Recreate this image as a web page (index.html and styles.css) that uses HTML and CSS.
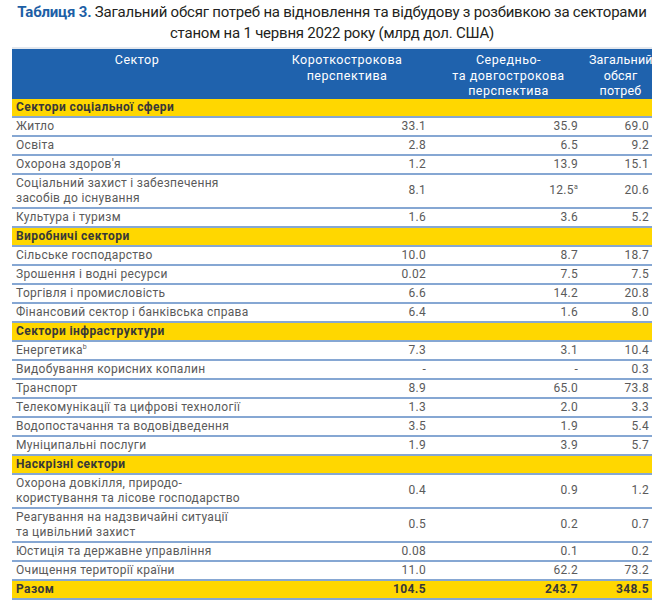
FILE: index.html
```html
<!DOCTYPE html>
<html lang="uk">
<head>
<meta charset="utf-8">
<link rel="stylesheet" href="styles.css">
</head>
<body>
<div class="page">
  <h1 class="title"><span class="label">Таблиця 3.</span> Загальний обсяг потреб на відновлення та відбудову з розбивкою за секторами<br>станом на 1 червня 2022 року (млрд дол. США)</h1>
  <table class="tbl">
    <colgroup>
      <col class="c1"><col class="c2"><col class="c3"><col class="c4">
    </colgroup>
    <thead>
      <tr>
        <th>Сектор</th>
        <th>Короткострокова<br>перспектива</th>
        <th>Середньо-<br>та довгострокова<br>перспектива</th>
        <th class="h4">Загальний<br>обсяг<br>потреб</th>
      </tr>
    </thead>
    <tbody>
      <tr class="sec"><td>Сектори соціальної сфери</td><td></td><td></td><td></td></tr>
      <tr><td>Житло</td><td class="n2">33.1</td><td class="n3">35.9</td><td class="n4">69.0</td></tr>
      <tr><td>Освіта</td><td class="n2">2.8</td><td class="n3">6.5</td><td class="n4">9.2</td></tr>
      <tr><td>Охорона здоров'я</td><td class="n2">1.2</td><td class="n3">13.9</td><td class="n4">15.1</td></tr>
      <tr><td>Соціальний захист і забезпечення<br>засобів до існування</td><td class="n2">8.1</td><td class="n3">12.5<sup>a</sup></td><td class="n4">20.6</td></tr>
      <tr><td>Культура і туризм</td><td class="n2">1.6</td><td class="n3">3.6</td><td class="n4">5.2</td></tr>
      <tr class="sec"><td>Виробничі сектори</td><td></td><td></td><td></td></tr>
      <tr><td>Сільське господарство</td><td class="n2">10.0</td><td class="n3">8.7</td><td class="n4">18.7</td></tr>
      <tr><td>Зрошення і водні ресурси</td><td class="n2">0.02</td><td class="n3">7.5</td><td class="n4">7.5</td></tr>
      <tr><td>Торгівля і промисловість</td><td class="n2">6.6</td><td class="n3">14.2</td><td class="n4">20.8</td></tr>
      <tr><td>Фінансовий сектор і банківська справа</td><td class="n2">6.4</td><td class="n3">1.6</td><td class="n4">8.0</td></tr>
      <tr class="sec"><td>Сектори інфраструктури</td><td></td><td></td><td></td></tr>
      <tr><td>Енергетика<sup>b</sup></td><td class="n2">7.3</td><td class="n3">3.1</td><td class="n4">10.4</td></tr>
      <tr><td>Видобування корисних копалин</td><td class="n2">-</td><td class="n3">-</td><td class="n4">0.3</td></tr>
      <tr><td>Транспорт</td><td class="n2">8.9</td><td class="n3">65.0</td><td class="n4">73.8</td></tr>
      <tr><td>Телекомунікації та цифрові технології</td><td class="n2">1.3</td><td class="n3">2.0</td><td class="n4">3.3</td></tr>
      <tr><td>Водопостачання та водовідведення</td><td class="n2">3.5</td><td class="n3">1.9</td><td class="n4">5.4</td></tr>
      <tr><td>Муніципальні послуги</td><td class="n2">1.9</td><td class="n3">3.9</td><td class="n4">5.7</td></tr>
      <tr class="sec"><td>Наскрізні сектори</td><td></td><td></td><td></td></tr>
      <tr><td>Охорона довкілля, природо-<br>користування та лісове господарство</td><td class="n2">0.4</td><td class="n3">0.9</td><td class="n4">1.2</td></tr>
      <tr><td>Реагування на надзвичайні ситуації<br>та цивільний захист</td><td class="n2">0.5</td><td class="n3">0.2</td><td class="n4">0.7</td></tr>
      <tr><td>Юстиція та державне управління</td><td class="n2">0.08</td><td class="n3">0.1</td><td class="n4">0.2</td></tr>
      <tr><td>Очищення території країни</td><td class="n2">11.0</td><td class="n3">62.2</td><td class="n4">73.2</td></tr>
      <tr class="sec total"><td>Разом</td><td class="n2">104.5</td><td class="n3">243.7</td><td class="n4">348.5</td></tr>
    </tbody>
  </table>
</div>
</body>
</html>
```

FILE: styles.css
```css
html, body {
  margin: 0;
  padding: 0;
  background: #ffffff;
}

.page {
  width: 663px;
  padding: 0 11px 0 12px;
  box-sizing: border-box;
}

.title {
  margin: 0;
  padding-top: 2px;
  height: 47px;
  font-family: "Roboto", sans-serif;
  font-weight: normal;
  font-size: 15px;
  letter-spacing: -0.22px;
  line-height: 21px;
  color: #231f20;
  text-align: center;
  white-space: nowrap;
  box-sizing: border-box;
}

.title .label {
  color: #1d5fa6;
  font-weight: bold;
}

.tbl {
  width: 640px;
  border-collapse: collapse;
  table-layout: fixed;
  font-family: "Roboto", sans-serif;
  font-size: 12px;
  letter-spacing: 0.3px;
  color: #5a5a5a;
  border-top: 2px solid #e4e8ee;
}

.c1 { width: 250px; }
.c2 { width: 170px; }
.c3 { width: 153px; }
.c4 { width: 67px; }

.tbl th {
  background: #1f62ad;
  color: #ffffff;
  font-weight: normal;
  font-size: 12.5px;
  letter-spacing: 0.5px;
  line-height: 15.5px;
  height: 50px;
  padding: 3px 0 0 0;
  vertical-align: top;
  text-align: center;
  box-sizing: border-box;
}

.tbl th.h4 {
  padding-left: 4px;
  letter-spacing: 0.2px;
}

.tbl td {
  line-height: 15px;
  padding: 1px 4px 1px 4px;
  border-bottom: 2px solid #86a7d3;
  vertical-align: middle;
  white-space: nowrap;
}

.tbl td.n2 { text-align: right; padding-right: 6px; }
.tbl td.n3 { text-align: right; padding-right: 7px; }
.tbl td.n4 { text-align: right; padding-right: 3px; }

.tbl tr.sec td {
  background: #ffd700;
  color: #383838;
  font-weight: bold;
  letter-spacing: 0.4px;
}

.tbl sup {
  font-size: 7px;
  line-height: 0;
  vertical-align: 5px;
}
```
